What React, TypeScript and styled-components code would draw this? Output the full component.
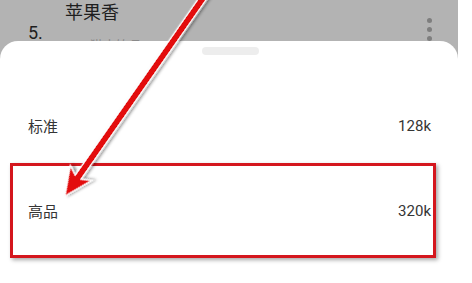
import styled, { createGlobalStyle } from "styled-components";

const Global = createGlobalStyle`
  html, body {
    margin: 0;
    padding: 0;
    background: #ffffff;
    font-family: Roboto, "Noto Sans CJK SC", "Noto Sans", sans-serif;
  }
  * { box-sizing: border-box; }
`;

const Screen = styled.div`
  position: relative;
  width: 458px;
  height: 283px;
  overflow: hidden;
  background: #b3b3b3;
`;

const ListItem = styled.div`
  display: grid;
  grid-template-columns: 37px 1fr 24px;
  padding: 2px 17px 0 28px;
  height: 60px;
`;

const Index = styled.div`
  font-size: 18px;
  color: #1e1e1e;
  padding-top: 20px;
`;

const ItemBody = styled.div`
  display: flex;
  flex-direction: column;
  gap: 15px;
`;

const ItemTitle = styled.div`
  font-size: 18px;
  line-height: 22px;
  color: #1e1e1e;
`;

const ItemMeta = styled.div`
  display: flex;
  align-items: flex-start;
  gap: 4px;
  font-size: 13px;
  line-height: 14px;
  color: #8a8a8a;
`;

const Tag = styled.span`
  display: inline-block;
  width: 21px;
  height: 12px;
  margin-top: 2px;
  border: 2px solid #4f7a55;
  border-radius: 2px;
`;

const More = styled.div`
  display: flex;
  flex-direction: column;
  align-items: center;
  gap: 4px;
  padding-top: 16px;
`;

const Dot = styled.span`
  width: 5px;
  height: 5px;
  border-radius: 50%;
  background: #7e7e7e;
`;

const Sheet = styled.div`
  position: absolute;
  top: 41px;
  left: 0;
  right: 0;
  bottom: -40px;
  background: #ffffff;
  border-radius: 18px 18px 0 0;
  display: flex;
  flex-direction: column;
`;

const Handle = styled.div`
  align-self: center;
  width: 57px;
  height: 8px;
  margin: 6px 0 28px 2px;
  border-radius: 4px;
  background: #ededed;
`;

const Option = styled.div`
  height: 85px;
  display: flex;
  align-items: center;
  justify-content: space-between;
  padding: 0 27px 0 28px;
  font-size: 15px;
  color: #353535;
`;

const Annotation = styled.div`
  position: absolute;
  left: 10px;
  top: 163px;
  width: 426px;
  height: 95px;
  border: 3px solid #d4161d;
  box-shadow: 2px 2px 4px rgba(0, 0, 0, 0.35);
  pointer-events: none;
`;

const ArrowLayer = styled.svg`
  position: absolute;
  left: 0;
  top: 0;
  pointer-events: none;
`;

export default function App() {
  return (
    <>
      <Global />
      <Screen>
        <ListItem>
          <Index>5.</Index>
          <ItemBody>
            <ItemTitle>苹果香</ItemTitle>
            <ItemMeta>
              <Tag />
              <span>猫本饮品</span>
            </ItemMeta>
          </ItemBody>
          <More>
            <Dot />
            <Dot />
            <Dot />
          </More>
        </ListItem>

        <Sheet>
          <Handle />
          <Option>
            <span>标准</span>
            <span>128k</span>
          </Option>
          <Option>
            <span>高品</span>
            <span>320k</span>
          </Option>
        </Sheet>

        <Annotation />

        <ArrowLayer width="458" height="283" viewBox="0 0 458 283">
          <defs>
            <filter id="shade" x="-20%" y="-20%" width="140%" height="140%">
              <feDropShadow dx="2" dy="2" stdDeviation="1.6" floodColor="#000" floodOpacity="0.45" />
            </filter>
          </defs>
          <g transform="translate(65 196) rotate(-55.1)" filter="url(#shade)">
            <polygon
              points="0,0 28,-13 23,-3.6 250,-3.6 250,3.6 23,3.6 28,13"
              fill="#e30b10"
              stroke="#ffffff"
              strokeWidth="1.3"
              strokeLinejoin="miter"
            />
          </g>
        </ArrowLayer>
      </Screen>
    </>
  );
}
